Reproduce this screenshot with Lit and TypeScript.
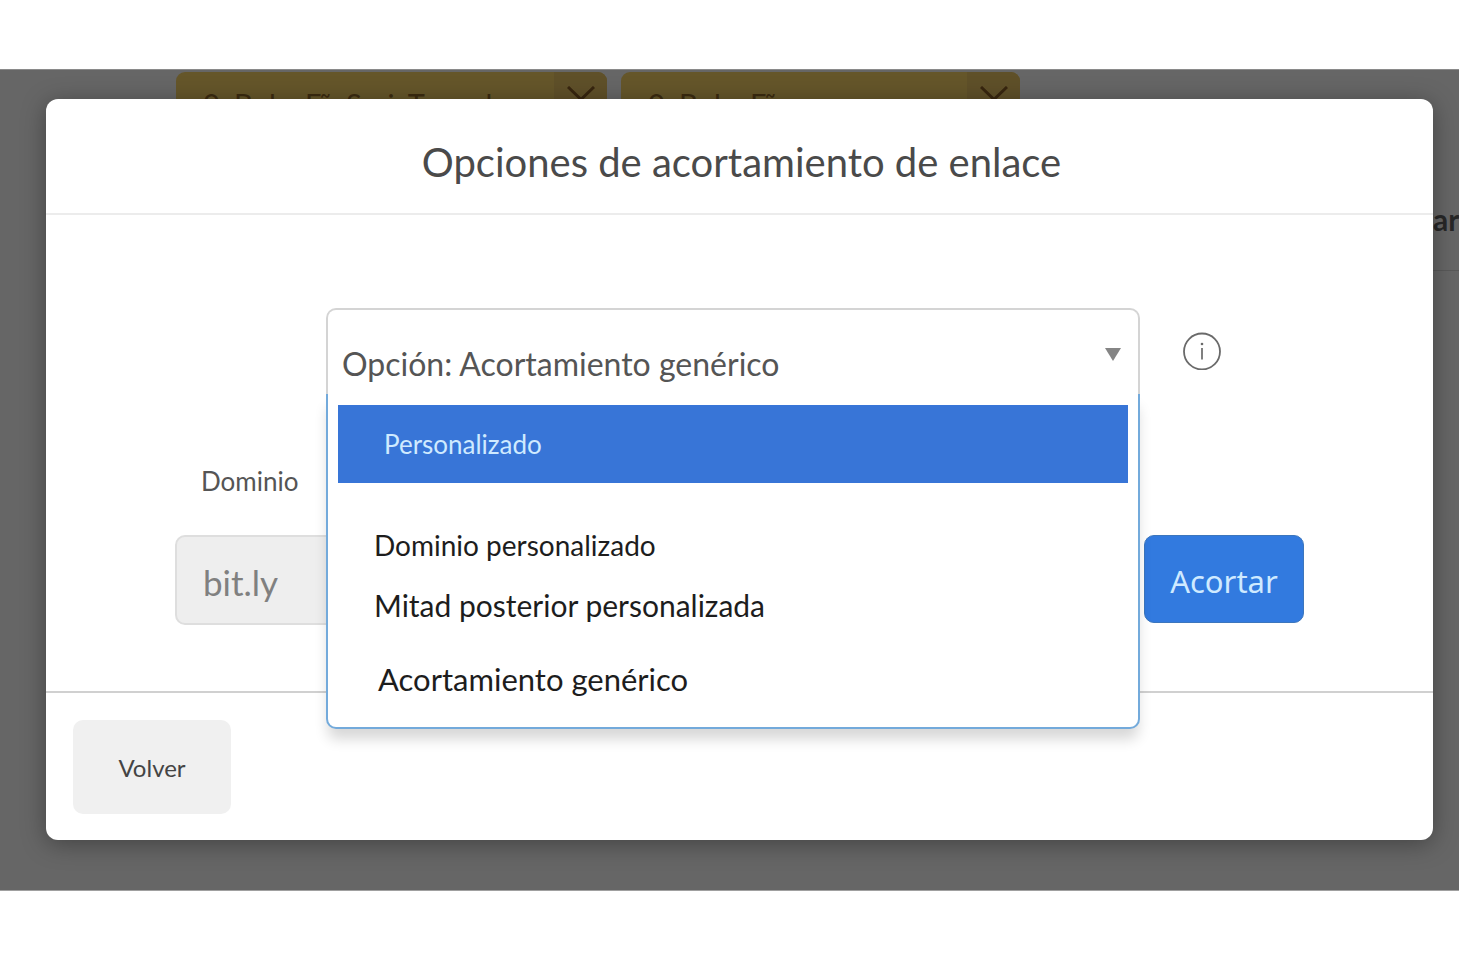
import { LitElement, html, css } from "lit";
import { customElement, state } from "lit/decorators.js";

interface Choice {
  id: string;
  label: string;
  kind: string;
}

const CHOICES: Choice[] = [
  { id: "custom", label: "Personalizado", kind: "active" },
  { id: "domain", label: "Dominio personalizado", kind: "plain" },
  { id: "backhalf", label: "Mitad posterior personalizada", kind: "wide" },
  { id: "generic", label: "Acortamiento genérico", kind: "generic" },
];

@customElement("tag-chip")
class TagChip extends LitElement {
  static properties = { label: {} };
  declare label: string;

  static styles = css`
    :host {
      display: flex;
      justify-content: space-between;
      height: 64px;
      box-sizing: border-box;
      border-radius: 9px;
      overflow: hidden;
      background: #65562a;
      color: #3b2b10;
    }
    .text {
      padding: 14px 0 0 27px;
      font-size: 29px;
      line-height: 36px;
      white-space: nowrap;
    }
    .remove {
      display: flex;
      justify-content: center;
      width: 53px;
      padding: 14px 0 0;
      border: 0;
      background: #5f5029;
      color: #38260f;
    }
    .remove svg {
      display: block;
    }
  `;

  render() {
    return html`
      <span class="text">${this.label}</span>
      <button class="remove" aria-label="Quitar">
        <svg width="28" height="28" viewBox="0 0 28 28" fill="none" stroke="currentColor" stroke-width="3">
          <path d="M1 1 L27 26 M27 1 L1 26" />
        </svg>
      </button>
    `;
  }
}

@customElement("app-root")
class AppRoot extends LitElement {
  @state() private selected = "generic";

  static styles = css`
    :host {
      display: block;
      box-sizing: border-box;
      min-height: 100vh;
      padding: 69px 1px 69px 0;
      background: #fff;
      font-family: Lato, "Liberation Sans", sans-serif;
      color: #4a4a4a;
    }
    * {
      box-sizing: border-box;
    }
    button,
    input,
    select {
      font-family: inherit;
      margin: 0;
    }
    .stage {
      display: grid;
      background: #666;
      border-top: 1px solid #8a8a8a;
      border-bottom: 1px solid #a0a0a0;
      overflow: hidden;
    }
    .behind,
    .modal {
      grid-area: 1 / 1;
      min-width: 0;
    }
    .tags {
      display: flex;
      gap: 14px;
      padding: 2px 0 0 176px;
    }
    .tag-long {
      width: 431px;
    }
    .tag-short {
      width: 399px;
    }
    .strip {
      width: 26px;
      height: 135px;
      margin-left: auto;
      padding-top: 63px;
      border-bottom: 1px solid #595959;
      overflow: hidden;
      white-space: nowrap;
      color: #272727;
      font-size: 30px;
      line-height: 40px;
      font-weight: 700;
    }
    .modal {
      position: relative;
      margin: 29px 26px 50px 46px;
      background: #fff;
      border-radius: 12px;
      box-shadow: 0 4px 24px rgba(0, 0, 0, 0.35);
    }
    .head {
      padding: 37px 0 25px 4px;
      border-bottom: 2px solid #ececec;
      text-align: center;
    }
    .title {
      margin: 0;
      font-size: 40px;
      line-height: 52px;
      font-weight: 400;
    }
    .body {
      padding: 93px 129px 66px;
    }
    .option-row {
      display: flex;
      align-items: center;
      gap: 43px;
      padding: 0 83px 0 151px;
    }
    .picker {
      position: relative;
      flex: 1;
      min-width: 0;
    }
    .select {
      display: block;
      width: 100%;
      height: 86px;
      padding: 24px 60px 0 14px;
      border: 2px solid #d4d4d4;
      border-bottom: 0;
      border-radius: 10px 10px 0 0;
      background: #fff;
      color: #555;
      font-size: 32px;
      line-height: 40px;
      appearance: none;
      outline: none;
    }
    .caret {
      position: absolute;
      right: 18px;
      top: 39px;
      pointer-events: none;
    }
    .menu {
      position: absolute;
      z-index: 2;
      top: 100%;
      left: 0;
      right: 0;
      margin: 0;
      padding: 11px 10px 18px;
      list-style: none;
      background: #fff;
      border: 2px solid #73aadb;
      border-top: 0;
      border-radius: 0 0 10px 10px;
      box-shadow: 0 12px 14px -2px rgba(0, 0, 0, 0.16);
      color: #1d1d1d;
      cursor: pointer;
    }
    .item {
      padding: 0 36px;
      font-size: 28px;
      line-height: 60px;
    }
    .active {
      margin-bottom: 32px;
      padding: 0 46px;
      background: #3875d7;
      color: #cfeaff;
      font-size: 26px;
      line-height: 78px;
    }
    .wide {
      font-size: 30px;
    }
    .generic {
      margin-top: 14px;
      padding: 0 40px;
      font-size: 31px;
    }
    .info {
      width: 38px;
      height: 38px;
      padding: 0;
      border: 0;
      background: none;
      color: #6a6a6a;
    }
    .info svg {
      display: block;
    }
    .label {
      display: block;
      padding: 71px 26px 38px;
      font-size: 26px;
      line-height: 32px;
      color: #555;
    }
    .domain-row {
      display: flex;
      gap: 14px;
      align-items: flex-start;
    }
    .domain {
      flex: 1;
      min-width: 0;
      height: 90px;
      padding: 4px 26px 0;
      border: 2px solid #dedede;
      border-radius: 10px;
      background: #eee;
      color: #808080;
      font-size: 35px;
    }
    .shorten {
      width: 160px;
      height: 88px;
      padding: 4px 0 0;
      border: 1px solid #3c76bd;
      border-radius: 10px;
      background: #327adf;
      color: #cfeaff;
      font-family: "Noto Sans", sans-serif;
      font-size: 31px;
    }
    .foot {
      padding: 27px 27px 26px;
      border-top: 2px solid #d0d0d0;
    }
    .back {
      display: block;
      width: 158px;
      height: 94px;
      padding: 0;
      border: 0;
      border-radius: 10px;
      background: #f0f0f0;
      color: #444;
      font-size: 24px;
    }
  `;

  private pick(id: string) {
    this.selected = id;
  }

  render() {
    return html`
      <div class="stage">
        <div class="behind">
          <div class="tags">
            <tag-chip class="tag-long" label="0. Bola: Fĩr Seri, Tunnel"></tag-chip>
            <tag-chip class="tag-short" label="0. Bola: Fĩr"></tag-chip>
          </div>
          <div class="strip">ar</div>
        </div>

        <section class="modal" role="dialog" aria-labelledby="title">
          <header class="head">
            <h1 class="title" id="title">Opciones de acortamiento de enlace</h1>
          </header>

          <div class="body">
            <div class="option-row">
              <div class="picker">
                <select class="select" aria-label="Opción">
                  <option value="generic">Opción: Acortamiento genérico</option>
                </select>
                <svg class="caret" width="18" height="15" viewBox="0 0 18 15" aria-hidden="true">
                  <path d="M1 1 H17 L9 14 Z" fill="#858585" />
                </svg>
                <ul class="menu" role="listbox" aria-label="Opciones">
                  ${CHOICES.map(
                    (c) => html`<li
                      class="item ${c.kind}"
                      role="option"
                      aria-selected=${c.id === this.selected ? "true" : "false"}
                      @click=${() => this.pick(c.id)}
                    >${c.label}</li>`
                  )}
                </ul>
              </div>
              <button class="info" aria-label="Información">
                <svg width="38" height="38" viewBox="0 0 38 38" fill="none" stroke="currentColor">
                  <circle cx="19" cy="19.5" r="18" stroke-width="1.8" />
                  <path d="M19 16 V27.5" stroke-width="1.7" />
                  <circle cx="19" cy="12" r="1.3" fill="currentColor" stroke="none" />
                </svg>
              </button>
            </div>

            <label class="label" for="domain">Dominio</label>
            <div class="domain-row">
              <input class="domain" id="domain" type="text" value="bit.ly" />
              <button class="shorten">Acortar</button>
            </div>
          </div>

          <footer class="foot">
            <button class="back">Volver</button>
          </footer>
        </section>
      </div>
    `;
  }
}
